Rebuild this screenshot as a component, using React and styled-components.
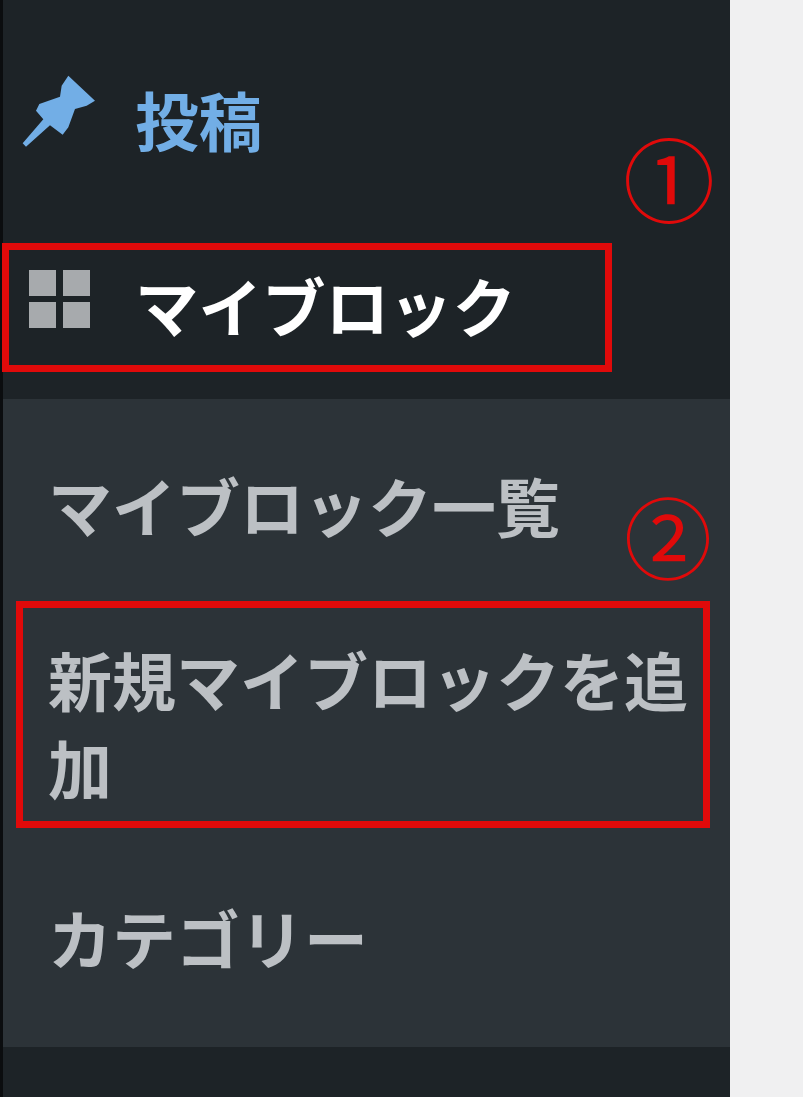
import React from "react";
import styled, { createGlobalStyle } from "styled-components";

const Global = createGlobalStyle`
  html, body { margin: 0; padding: 0; background: #f0f0f1; }
  body { font-family: "Liberation Sans", "Noto Sans CJK JP", sans-serif; }
`;

const Page = styled.div`
  position: relative;
  width: 803px;
  height: 1097px;
  overflow: hidden;
  background: #f0f0f1;
  filter: blur(0.6px);
`;

const Sidebar = styled.nav`
  width: 727px;
  height: 1097px;
  background: #1d2327;
  border-left: 3px solid #0b0d0f;
  display: flex;
  flex-direction: column;
`;

const TopMenu = styled.div`
  height: 399px;
  padding-top: 60px;
  box-sizing: border-box;
  display: flex;
  flex-direction: column;
`;

const TopItem = styled.div`
  display: flex;
  align-items: center;
  height: ${(p) => p.$h}px;
  margin-top: ${(p) => p.$mt}px;
  padding-left: ${(p) => p.$pad}px;
  gap: ${(p) => p.$gap}px;
  color: ${(p) => p.$color};
  font-size: 63.5px;
  font-weight: 700;
  line-height: 1;
`;

const ItemLabel = styled.span`
  font-family: "Noto Sans CJK JP", sans-serif;
  white-space: nowrap;
`;

const PinSvg = styled.svg`
  flex: none;
  margin-bottom: 16px;
`;

const GridSvg = styled.svg`
  flex: none;
  margin-bottom: 12px;
`;

const Submenu = styled.div`
  height: 648px;
  box-sizing: border-box;
  background: #2c3338;
  padding: 61px 30px 0 45px;
  display: flex;
  flex-direction: column;
`;

const SubItem = styled.div`
  font-family: "Noto Sans CJK JP", sans-serif;
  font-size: 64px;
  font-weight: 700;
  line-height: 88px;
  color: #bcc0c4;
  margin-bottom: ${(p) => p.$mb}px;
`;

const Highlight = styled.div`
  position: absolute;
  box-sizing: border-box;
  left: ${(p) => p.$x}px;
  top: ${(p) => p.$y}px;
  width: ${(p) => p.$w}px;
  height: ${(p) => p.$h}px;
  border: 7px solid #e00a0a;
`;

const Marker = styled.div`
  position: absolute;
  left: ${(p) => p.$x}px;
  top: ${(p) => p.$y}px;
  width: 84px;
  height: 84px;
  display: flex;
  align-items: center;
  justify-content: center;
  font-family: "Noto Sans CJK JP", sans-serif;
  font-size: ${(p) => p.$size}px;
  line-height: 1;
  color: #e00a0a;
`;

const PinIcon = () => (
  <PinSvg width="78.33" height="75" viewBox="60 40 235 225" fill="#72aee6">
    <path d="M68 248 L130 176 L108 150 L118 130 L180 108 L185 75 L205 45 L285 120 L260 135 L225 145 L205 200 L188 222 L150 194 L78 258 Z" />
  </PinSvg>
);

const GridIcon = () => (
  <GridSvg width="61" height="58" viewBox="0 0 61 58" fill="#a7aaad">
    <rect x="0" y="0" width="27" height="26" />
    <rect x="34" y="0" width="27" height="26" />
    <rect x="0" y="32" width="27" height="26" />
    <rect x="34" y="32" width="27" height="26" />
  </GridSvg>
);

export default function App() {
  return (
    <>
      <Global />
      <Page>
        <Sidebar>
          <TopMenu>
            <TopItem $h={118} $mt={0} $pad={17} $gap={37} $color="#72aee6">
              <PinIcon />
              <ItemLabel>投稿</ItemLabel>
            </TopItem>
            <TopItem $h={130} $mt={62} $pad={26} $gap={45} $color="#ffffff">
              <GridIcon />
              <ItemLabel>マイブロック</ItemLabel>
            </TopItem>
          </TopMenu>
          <Submenu>
            <SubItem $mb={86}>マイブロック一覧</SubItem>
            <SubItem $mb={82}>新規マイブロックを追加</SubItem>
            <SubItem $mb={0}>カテゴリー</SubItem>
          </Submenu>
        </Sidebar>
        <Highlight $x={2} $y={243} $w={610} $h={129} />
        <Highlight $x={16} $y={601} $w={694} $h={227} />
        <Marker $x={627} $y={134} $size={92}>①</Marker>
        <Marker $x={626} $y={492} $size={88}>②</Marker>
      </Page>
    </>
  );
}
